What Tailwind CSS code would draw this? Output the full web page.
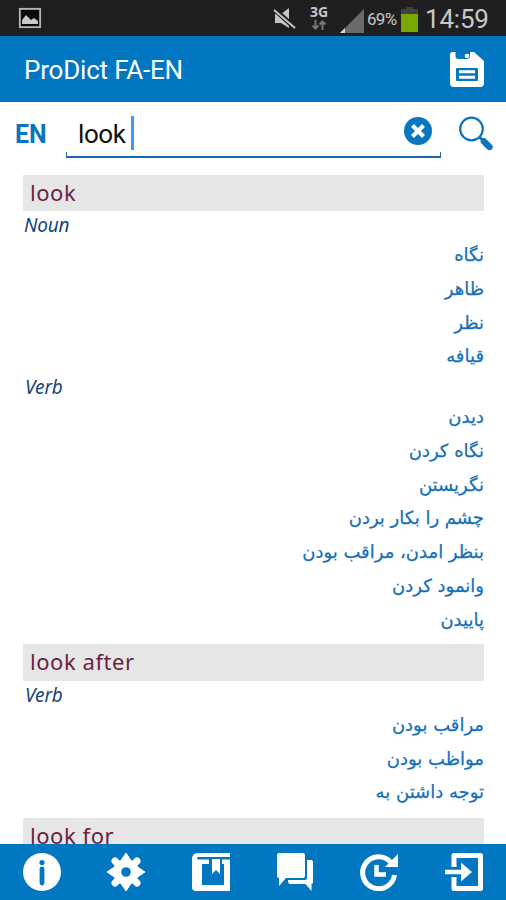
<!DOCTYPE html>
<html lang="en">
  <head>
    <meta charset="UTF-8" />
    <meta name="viewport" content="width=device-width, initial-scale=1.0" />
    <title>ProDict FA-EN</title>
    <script src="https://cdn.jsdelivr.net/npm/@tailwindcss/browser@4"></script>
  </head>
  <body class="flex flex-col h-screen overflow-hidden bg-white font-['Roboto',sans-serif]">
    <!-- Status bar -->
    <div class="flex items-center h-9 shrink-0 bg-[#1f1f1f] pl-[18px] pr-[16px] text-[#c8c8c8]">
      <svg class="w-6 h-[22px]" viewBox="0 0 24 22">
        <rect width="24" height="22" fill="#080808" />
        <rect x="1.8" y="1.8" width="20.4" height="18.4" fill="none" stroke="#b4b4b4" stroke-width="2" />
        <path d="M4 17v-4l4-5 5 5 3-2 4 3v3z" fill="#c8c8c8" />
      </svg>
      <svg class="w-[23px] h-[22px] ml-[231px] mt-[2px]" viewBox="0 0 23 22">
        <path d="M2 6h6l8-6v20l-8-5H2z" fill="#c4c4c4" />
        <path d="M1 1l21 19" stroke="#1f1f1f" stroke-width="5" />
        <path d="M1 2l21 18" stroke="#c4c4c4" stroke-width="2" />
      </svg>
      <div class="flex flex-col items-center w-5 ml-[13px] pb-[3px]">
        <span class="text-[14px] leading-[16px] font-bold font-['Open_Sans',sans-serif]">3G</span>
        <svg class="w-4 h-[10px]" viewBox="0 0 16 10" fill="none" stroke="#777" stroke-width="2">
          <path d="M4.500 0v8M1.500 5.500l3 3 3-3M11.500 10V2M8.500 4.500l3-3 3 3" />
        </svg>
      </div>
      <svg class="w-6 h-6 ml-[11px] mt-[5px]" viewBox="0 0 24 24">
        <path d="M0 24L24 0v24z" fill="#6b6b6b" />
        <path d="M0 24l5-5v5z" fill="#d8d8d8" />
      </svg>
      <span class="w-[31px] ml-[3px] mt-[3px] text-[17px] tracking-[-0.7px] whitespace-nowrap">69%</span>
      <svg class="w-[17px] h-[25px] ml-[3px] mt-[3px]" viewBox="0 0 17 25">
        <path d="M5 0h7v2h5v5H0V2h5z" fill="#414141" />
        <rect y="7" width="17" height="18" fill="#7aa800" />
      </svg>
      <span class="ml-[7px] mt-px text-[26px] leading-9 tracking-[-0.2px] whitespace-nowrap">14:59</span>
    </div>

    <!-- Title bar -->
    <header class="flex items-center justify-between h-[66px] shrink-0 bg-[#0077c0] pl-[24px] pr-[22px] text-white">
      <h1 class="text-[26px] tracking-[-0.2px] pt-[2px]">ProDict FA-EN</h1>
      <svg class="w-[34px] h-[35px]" viewBox="0 0 34 35">
        <path d="M3 0h2.500v4q0 3 3 3H17q3 0 3-3V0h4l10 9v22q0 4-4 4H4q-4 0-4-4V3q0-3 3-3z" fill="#fff" />
        <circle cx="17" cy="4" r="2.300" fill="#fff" />
        <rect x="6" y="16" width="22" height="13" rx="1" fill="#0077c0" />
        <path d="M9 19.800h16M9 25.200h16" stroke="#fff" stroke-width="3" />
      </svg>
    </header>

    <!-- Search -->
    <div class="flex h-[72.500px] shrink-0 pl-[15px] pr-3 text-[#0b74bd]">
      <span class="w-[51px] pt-[15px] text-[25px] leading-9 font-bold">EN</span>
      <div class="relative flex items-start w-[375px] h-14 pl-3 pr-[9px]">
        <span class="pt-[14px] text-[26px] leading-9 tracking-[-0.4px] text-[#111]">look</span>
        <span class="w-[3px] h-[34px] ml-[5px] mt-[14px] bg-[#3c9bf5]"></span>
        <svg class="w-7 h-7 ml-auto mt-[15px]" viewBox="0 0 28 28">
          <circle cx="14" cy="14" r="14" fill="#0877bf" />
          <path d="M8.500 8.500l11 11M19.500 8.500l-11 11" stroke="#fff" stroke-width="4.200" />
        </svg>
        <div class="absolute left-0 right-0 bottom-0 h-1.5 border-x-[1.5px] border-b-2 border-[#1a66b0]"></div>
      </div>
      <svg class="w-[35px] h-[35px] ml-[18px] mt-[14px]" viewBox="0 0 35 35" fill="none" stroke="#0b74bd">
        <circle cx="12.500" cy="13" r="11.300" stroke-width="2.200" />
        <path d="M20.500 21l4 4" stroke-width="3" />
        <path d="M25 25.500l5.500 5.500" stroke-width="6.500" stroke-linecap="round" />
      </svg>
    </div>

    <!-- Results -->
    <main class="flex-1 min-h-0 overflow-hidden pl-[23px] pr-[22px] text-[#1570b8]">
      <section class="mb-[8px]">
        <h2 class="h-[36.500px] pl-[7px] bg-[#e6e6e6] text-[#6b1f40] text-[22px] leading-[35px] tracking-[0.55px] font-['Noto_Sans',sans-serif]">look</h2>
        <p class="h-[27px] pl-px text-[19px] leading-[28px] tracking-[-0.2px] italic text-[#16457c] font-['Noto_Sans',sans-serif]">Noun</p>
        <ul dir="rtl" lang="fa" class="text-[18px] leading-[33.750px] font-['DejaVu_Sans',sans-serif] [-webkit-text-stroke:0.25px]">
          <li>نگاه</li>
          <li>ظاهر</li>
          <li>نظر</li>
          <li>قیافه</li>
        </ul>
        <p class="h-[27px] pl-[2px] text-[19px] leading-[28px] tracking-[-0.1px] italic text-[#16457c] font-['Noto_Sans',sans-serif]">Verb</p>
        <ul dir="rtl" lang="fa" class="text-[18px] leading-[33.750px] font-['DejaVu_Sans',sans-serif] [-webkit-text-stroke:0.25px]">
          <li>دیدن</li>
          <li>نگاه کردن</li>
          <li>نگریستن</li>
          <li>چشم را بکار بردن</li>
          <li>بنظر امدن، مراقب بودن</li>
          <li>وانمود کردن</li>
          <li>پاییدن</li>
        </ul>
      </section>
      <section class="mb-[8.500px]">
        <h2 class="h-[36.500px] pl-[7px] bg-[#e6e6e6] text-[#6b1f40] text-[22px] leading-[35px] tracking-[0.55px] font-['Noto_Sans',sans-serif]">look after</h2>
        <p class="h-[27px] pl-[2px] text-[19px] leading-[28px] tracking-[-0.1px] italic text-[#16457c] font-['Noto_Sans',sans-serif]">Verb</p>
        <ul dir="rtl" lang="fa" class="text-[18px] leading-[33.750px] font-['DejaVu_Sans',sans-serif] [-webkit-text-stroke:0.25px]">
          <li>مراقب بودن</li>
          <li>مواظب بودن</li>
          <li>توجه داشتن به</li>
        </ul>
      </section>
      <section>
        <h2 class="h-[36.500px] pl-[7px] bg-[#e6e6e6] text-[#6b1f40] text-[22px] leading-[34px] tracking-[0.55px] font-['Noto_Sans',sans-serif]">look for</h2>
      </section>
    </main>

    <!-- Bottom toolbar -->
    <nav class="grid grid-cols-6 items-center justify-items-center h-14 shrink-0 bg-[#0077c0]">
      <svg class="w-[38px] h-[38px]" viewBox="0 0 38 38">
        <circle cx="19" cy="19" r="19" fill="#fff" />
        <circle cx="19" cy="9.500" r="2.600" fill="#0077c0" />
        <path d="M19 16v14" stroke="#0077c0" stroke-width="4.800" stroke-linecap="round" />
      </svg>
      <svg class="w-[38px] h-[38px]" viewBox="0 0 38 38">
        <g stroke="#fff" stroke-width="7" stroke-linecap="round">
          <path d="M8 8l22 22M30 8L8 30" />
        </g>
        <path d="M19 0l6 9H13zM19 38l6-9H13zM0 19l9-6v12zM38 19l-9-6v12z" fill="#fff" stroke="#fff" stroke-linejoin="round" />
        <circle cx="19" cy="19" r="13" fill="#fff" />
        <circle cx="19" cy="19" r="4.800" fill="#0077c0" />
      </svg>
      <svg class="w-[38px] h-[38px]" viewBox="0 0 38 38">
        <path d="M6 0h32v4H6q-2 1 0 2.500h11V11h-7v21h22V11h-2V6.500h8V38H4q-4 0-4-4V6q0-6 6-6z" fill="#fff" />
        <path d="M20 6h8v15l-4-4-4 4z" fill="#fff" />
      </svg>
      <svg class="w-9 h-[38px]" viewBox="0 0 36 38" fill="#fff">
        <path d="M2 0h24q2 0 2 2v21q0 2-2 2H9l-7 8V25q-2 0-2-2V2q0-2 2-2z" />
        <path d="M30 7h4q2 0 2 2v20q0 2-1.500 2v7l-6-7H13q-2 0-2-4h17q2 0 2-2z" />
      </svg>
      <svg class="w-[38px] h-[38px]" viewBox="0 0 38 38" fill="none" stroke="#fff">
        <path d="M31 9.500A16 16 0 1 0 34.500 22" stroke-width="5" />
        <path d="M38 1v13H25z" fill="#fff" stroke="none" />
        <path d="M16.500 12v9.500H26" stroke-width="4.500" />
      </svg>
      <svg class="w-[38px] h-[38px]" viewBox="0 0 38 38">
        <path d="M9 14V2.500h26.500v33H9V24" fill="none" stroke="#fff" stroke-width="5" stroke-linejoin="round" />
        <path d="M0 19h19" stroke="#fff" stroke-width="4.500" />
        <path d="M16 9.500L27 19l-11 9.500z" fill="#fff" />
      </svg>
    </nav>
  </body>
</html>
